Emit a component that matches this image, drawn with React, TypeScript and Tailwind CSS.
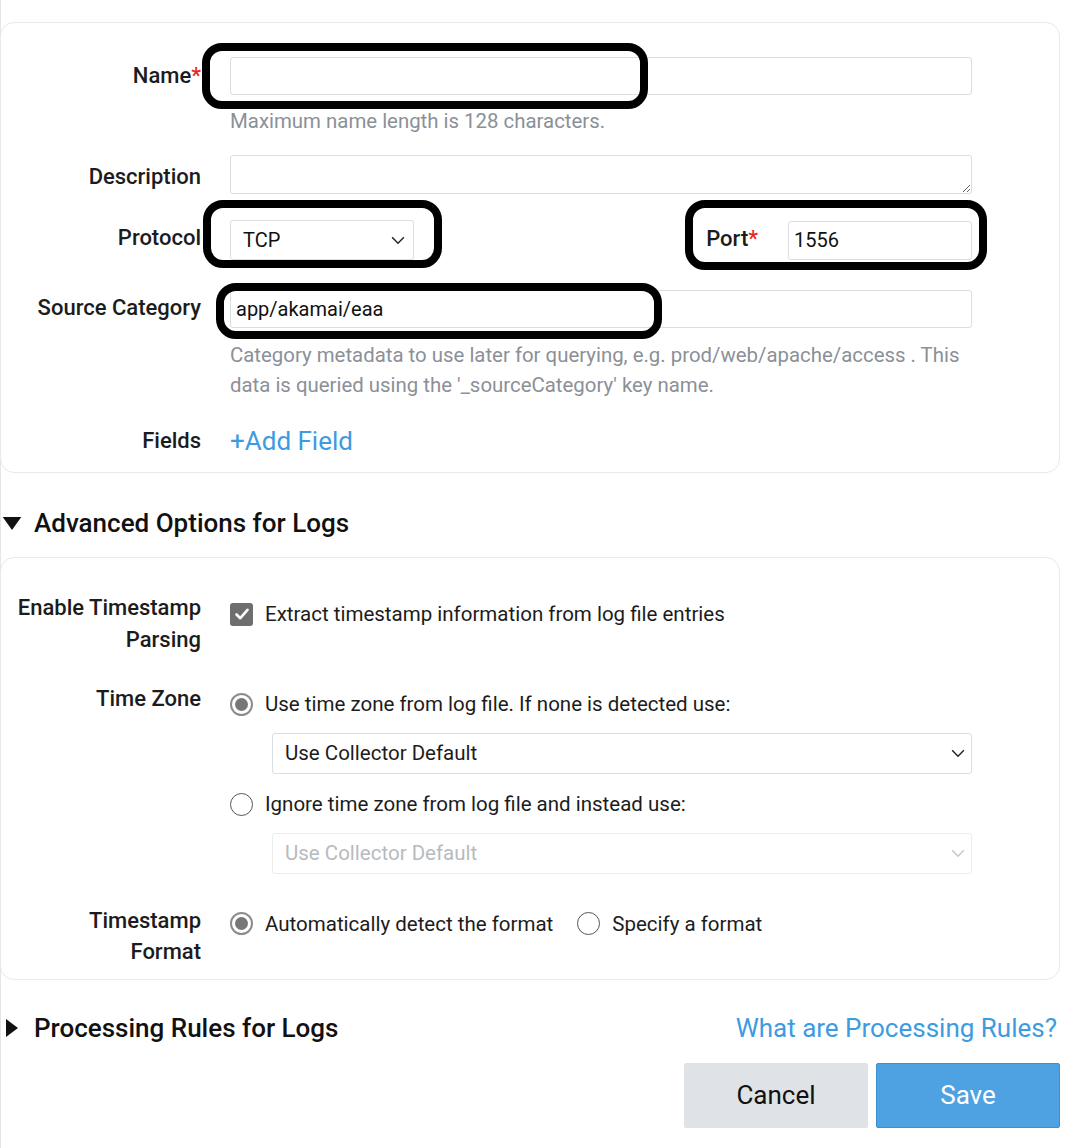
import React from 'react'

const font = { fontFamily: 'Roboto, "Noto Sans", sans-serif' }

function Chevron({ className }: { className?: string }) {
    return (
        <svg viewBox="0 0 16 10" className={className} fill="none" stroke="currentColor" strokeWidth="1.6">
            <path d="M1.5 1.5 L8 8 L14.5 1.5" />
        </svg>
    )
}

function Radio({ checked }: { checked?: boolean }) {
    return checked ? (
        <span className="flex h-[23px] w-[23px] shrink-0 items-center justify-center rounded-full border-2 border-[#8c8c8c] bg-white">
            <span className="h-[13px] w-[13px] rounded-full bg-[#777]" />
        </span>
    ) : (
        <span className="block h-[23px] w-[23px] shrink-0 rounded-full border-[1.5px] border-[#555] bg-white" />
    )
}

function Label({ children, className = '' }: { children: React.ReactNode; className?: string }) {
    return (
        <div className={`w-[200px] shrink-0 text-right text-[22px] font-medium text-[#1c1c1c] ${className}`}>{children}</div>
    )
}

// thick black rings drawn on top of the screenshot
function Ring({ className }: { className: string }) {
    return <div className={`pointer-events-none absolute rounded-[20px] border-[8px] border-black ${className}`} />
}

export default function App() {
    return (
        <div className="relative min-h-[1148px] w-[1084px] bg-white" style={font}>
            <div className="h-[1148px] w-[1060px] border-l border-[#e3e6ea] pt-[22px]">
                {/* Source details */}
                <div className="-ml-px rounded-[14px] border border-[#e6e9ed] pb-[16px] pt-[34px]">
                    <div className="flex items-center">
                        <Label className="leading-[24px]">
                            Name<span className="text-[#e8271f]">*</span>
                        </Label>
                        <input className="ml-[29px] h-[38px] w-[742px] rounded-[3px] border border-[#d9dee3] bg-white px-2 outline-none" />
                    </div>
                    <div className="ml-[229px] mt-[14px] text-[20.4px] leading-[24px] text-[#8b9098]">
                        Maximum name length is 128 characters.
                    </div>

                    <div className="mt-[22px] flex items-center">
                        <Label className="mt-[5px] leading-[24px]">Description</Label>
                        <textarea className="ml-[29px] block h-[39px] w-[742px] rounded-[3px] border border-[#d9dee3] bg-white px-2 outline-none" />
                    </div>

                    <div className="mt-[26px] flex items-center">
                        <Label className="-mt-[4px] leading-[24px]">Protocol</Label>
                        <div className="ml-[29px] flex w-[742px] items-center">
                            <div className="flex h-[40px] w-[184px] items-center justify-between rounded-[3px] border border-[#d9dee3] pl-[12px] pr-[7px] text-[20px] text-[#111]">
                                <span>TCP</span>
                                <Chevron className="h-[9px] w-[16px] text-[#222]" />
                            </div>
                            <div className="ml-auto flex items-center">
                                <span className="-mt-[3px] text-[22px] font-medium text-[#1c1c1c]">
                                    Port<span className="text-[#e8271f]">*</span>
                                </span>
                                <div className="ml-[30px] flex h-[39px] w-[184px] items-center rounded-[3px] border border-[#d9dee3] px-[5px] text-[20px] text-[#111]">
                                    1556
                                </div>
                            </div>
                        </div>
                    </div>

                    <div className="mt-[30px] flex items-center">
                        <Label className="-mt-[2px] leading-[24px]">Source Category</Label>
                        <div className="ml-[29px] flex h-[38px] w-[742px] items-center rounded-[3px] border border-[#d9dee3] px-[5px] text-[20px] text-[#111]">
                            app/akamai/eaa
                        </div>
                    </div>
                    <div className="ml-[229px] mt-[12px] w-[742px] text-[20.4px] leading-[30px] text-[#8b9098]">
                        Category metadata to use later for querying, e.g. prod/web/apache/access . This data is queried
                        using the '_sourceCategory' key name.
                    </div>

                    <div className="mt-[26px] flex items-center">
                        <Label className="leading-[30px]">Fields</Label>
                        <a className="ml-[29px] text-[26px] leading-[30px] text-[#3d9be1]">+Add Field</a>
                    </div>
                </div>

                <div className="mt-[34px] flex items-center text-[26px] font-medium leading-[32px] text-[#111]">
                    <svg viewBox="0 0 20 14" className="ml-[1px] h-[13px] w-[20px]">
                        <path d="M0 0 H20 L10 14 Z" fill="#111" />
                    </svg>
                    <span className="ml-[12px]">Advanced Options for Logs</span>
                </div>

                {/* Advanced options */}
                <div className="-ml-px mt-[18px] rounded-[14px] border border-[#e6e9ed] pb-[12px] pt-[34px]">
                    <div className="flex items-start">
                        <Label className="leading-[32px]">
                            Enable Timestamp
                            <br />
                            Parsing
                        </Label>
                        <div className="ml-[29px] mt-[7px] flex items-center">
                            <span className="flex h-[23px] w-[23px] items-center justify-center rounded-[3px] bg-[#6e6e6e]">
                                <svg viewBox="0 0 16 16" className="h-[16px] w-[16px]" fill="none" stroke="#fff" strokeWidth="2.6" strokeLinecap="round" strokeLinejoin="round">
                                    <path d="M2.5 8.5 L6.3 12.2 L13.5 3.8" />
                                </svg>
                            </span>
                            <span className="ml-[12px] text-[20.5px] text-[#1c1c1c]">Extract timestamp information from log file entries</span>
                        </div>
                    </div>

                    <div className="mt-[27px] flex items-start">
                        <Label className="leading-[32px]">Time Zone</Label>
                        <div className="ml-[29px] w-[742px]">
                            <div className="mt-[6px] flex items-center">
                                <Radio checked />
                                <span className="ml-[12px] text-[20.5px] text-[#1c1c1c]">Use time zone from log file. If none is detected use:</span>
                            </div>
                            <div className="ml-[42px] mt-[13px] flex h-[41px] items-center justify-between rounded-[3px] border border-[#d9dee3] pl-[12px] pr-[5px] text-[20.5px] text-[#1c1c1c]">
                                <span>Use Collector Default</span>
                                <Chevron className="h-[9px] w-[16px] text-[#222]" />
                            </div>
                            <div className="mt-[15px] flex items-center">
                                <Radio />
                                <span className="ml-[12px] text-[20.5px] text-[#1c1c1c]">Ignore time zone from log file and instead use:</span>
                            </div>
                            <div className="ml-[42px] mt-[13px] flex h-[41px] items-center justify-between rounded-[3px] border border-[#eaedf0] pl-[12px] pr-[5px] text-[20.5px] text-[#b7bbc0]">
                                <span>Use Collector Default</span>
                                <Chevron className="h-[9px] w-[16px] text-[#c4c7cb]" />
                            </div>
                        </div>
                    </div>

                    <div className="mt-[31px] flex items-start">
                        <Label className="leading-[31px]">
                            Timestamp
                            <br />
                            Format
                        </Label>
                        <div className="ml-[29px] mt-[4px] flex items-center text-[20.5px] text-[#1c1c1c]">
                            <Radio checked />
                            <span className="ml-[12px]">Automatically detect the format</span>
                            <span className="ml-[24px] flex">
                                <Radio />
                            </span>
                            <span className="ml-[12px]">Specify a format</span>
                        </div>
                    </div>
                </div>

                <div className="mt-[32px] flex items-center justify-between leading-[32px]">
                    <div className="flex items-center text-[26px] font-medium text-[#111]">
                        <svg viewBox="0 0 12 18" className="ml-[5px] h-[18px] w-[12px]">
                            <path d="M0 0 L12 9 L0 18 Z" fill="#111" />
                        </svg>
                        <span className="ml-[16px]">Processing Rules for Logs</span>
                    </div>
                    <a className="mr-[3px] text-[26px] text-[#3d9be1]">What are Processing Rules?</a>
                </div>

                <div className="mt-[19px] flex justify-end gap-[8px]">
                    <button className="h-[65px] w-[184px] rounded-[2px] bg-[#dfe3e7] text-[26px] text-[#111]">Cancel</button>
                    <button className="h-[65px] w-[184px] rounded-[2px] border border-[#3d8fd0] bg-[#4fa2e1] text-[26px] text-white">
                        Save
                    </button>
                </div>
            </div>

            <Ring className="left-[202px] top-[43px] h-[66px] w-[446px]" />
            <Ring className="left-[203px] top-[200px] h-[68px] w-[239px]" />
            <Ring className="left-[685px] top-[200px] h-[70px] w-[302px]" />
            <Ring className="left-[216px] top-[283px] h-[56px] w-[446px]" />
        </div>
    )
}
